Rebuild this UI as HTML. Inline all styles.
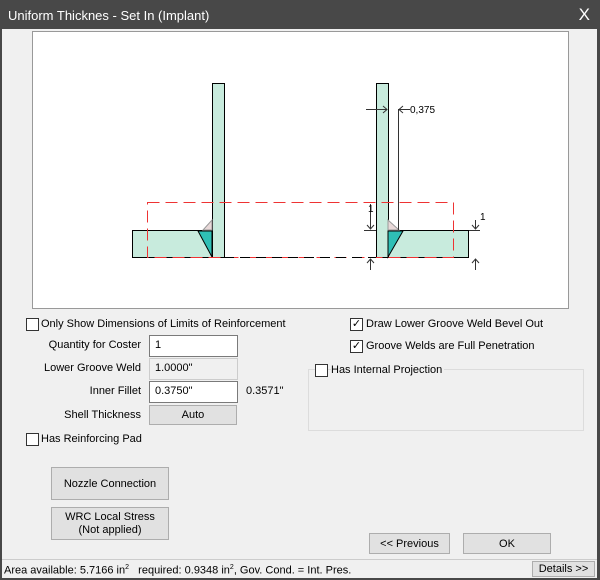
<!DOCTYPE html>
<html><head><style>
*{box-sizing:border-box}
body{margin:0;width:600px;height:580px;background:#484848;font-family:"Liberation Sans",sans-serif;font-size:11px;color:#000;position:relative;overflow:hidden}
.title{position:absolute;left:8px;top:8px;color:#fff;font-size:13px}
.x{position:absolute;right:10px;top:5px;color:#fff;font-size:17px}
.body{position:absolute;left:2px;top:29px;width:595px;height:549px;background:#f0f0f0}
.a{position:absolute}
.cb{position:absolute;width:13px;height:13px;border:1px solid #333;background:#fff}
.inp{position:absolute;height:22px;border:1px solid #7a7a7a;background:#fff;padding:3px 5px}
.ro{background:#f0f0f0;border-color:#ccc}
.btn{position:absolute;background:#e1e1e1;border:1px solid #adadad;text-align:center;display:flex;align-items:center;justify-content:center}
.lbl{position:absolute;text-align:right;width:141px;left:0}
</style></head><body>
<div class="title">Uniform Thicknes - Set In (Implant)</div>
<div class="x">X</div>
<div class="body"></div>
<svg class="a" style="left:0;top:0" width="600" height="580">
<rect x="32.5" y="31.5" width="536" height="277" fill="#fff" stroke="#999"/>
<g stroke="#000" stroke-width="1" fill="#c8ebdd">
<rect x="212.5" y="83.5" width="12" height="174"/>
<rect x="132.5" y="230.5" width="80" height="27"/>
<rect x="376.5" y="83.5" width="12" height="174"/>
<rect x="388.5" y="230.5" width="80" height="27"/>
</g>
<polygon points="198,231 212,231 212,257" fill="#2fbfb5" stroke="#000"/>
<polygon points="203,230 212,220 212,230" fill="#e8d8d8" stroke="#999"/>
<polygon points="388,231 403,231 388,257" fill="#2fbfb5" stroke="#000"/>
<polygon points="388,220 399,230 388,230" fill="#e8d8d8" stroke="#999"/>
<rect x="147.5" y="202.5" width="306" height="55" fill="none" stroke="#e33" stroke-dasharray="12,6"/>
<line x1="224" y1="257.5" x2="376" y2="257.5" stroke="#000" stroke-dasharray="10,6"/>
<g stroke="#333" fill="none">
<line x1="398.5" y1="109" x2="398.5" y2="230"/>
<line x1="366" y1="109.5" x2="387" y2="109.5"/><path d="M383,106 L387,109.5 L383,113"/>
<line x1="399" y1="109.5" x2="410" y2="109.5"/><path d="M403,106 L399,109.5 L403,113"/>
<line x1="370.5" y1="204" x2="370.5" y2="229"/><path d="M367,225 L370.5,229 L374,225"/>
<line x1="364" y1="230.5" x2="376" y2="230.5"/>
<line x1="370.5" y1="259" x2="370.5" y2="270"/><path d="M367,263 L370.5,259 L374,263"/>
<line x1="469" y1="230.5" x2="480" y2="230.5"/>
<line x1="475.5" y1="220" x2="475.5" y2="229"/><path d="M472,225 L475.5,229 L479,225"/>
<line x1="475.5" y1="259" x2="475.5" y2="270"/><path d="M472,263 L475.5,259 L479,263"/>
</g>
<text x="410" y="113" font-size="10" font-family="Liberation Sans">0,375</text>
<text x="368" y="212" font-size="10" font-family="Liberation Sans">1</text>
<text x="480" y="220" font-size="10" font-family="Liberation Sans">1</text>
<rect x="308.5" y="369.5" width="275" height="61" fill="none" stroke="#dcdcdc"/>
</svg>
<div class="cb" style="left:26px;top:318px"></div><div class="a" style="left:41px;top:318px">Only Show Dimensions of Limits of Reinforcement</div>
<div class="lbl" style="top:339px">Quantity for Coster</div><div class="inp" style="left:149px;top:335px;width:89px">1</div>
<div class="lbl" style="top:362px">Lower Groove Weld</div><div class="inp ro" style="left:149px;top:358px;width:89px">1.0000"</div>
<div class="lbl" style="top:385px">Inner Fillet</div><div class="inp" style="left:149px;top:381px;width:89px">0.3750"</div>
<div class="a" style="left:246px;top:385px">0.3571"</div>
<div class="lbl" style="top:409px">Shell Thickness</div><div class="btn" style="left:149px;top:405px;width:88px;height:20px">Auto</div>
<div class="cb" style="left:26px;top:433px"></div><div class="a" style="left:41px;top:433px">Has Reinforcing Pad</div>
<div class="cb" style="left:350px;top:318px;font-size:11px;line-height:10px;text-align:center">✓</div><div class="a" style="left:366px;top:318px">Draw Lower Groove Weld Bevel Out</div>
<div class="cb" style="left:350px;top:340px;font-size:11px;line-height:10px;text-align:center">✓</div><div class="a" style="left:366px;top:340px">Groove Welds are Full Penetration</div>
<div class="cb" style="left:315px;top:364px"></div><div class="a" style="left:331px;top:364px;background:#f0f0f0;padding-right:2px">Has Internal Projection</div>
<div class="btn" style="left:51px;top:467px;width:118px;height:33px">Nozzle Connection</div>
<div class="btn" style="left:51px;top:507px;width:118px;height:33px;line-height:13px">WRC Local Stress<br>(Not applied)</div>
<div class="btn" style="left:369px;top:533px;width:81px;height:21px">&lt;&lt; Previous</div>
<div class="btn" style="left:463px;top:533px;width:88px;height:21px">OK</div>
<div class="a" style="left:2px;top:559px;width:595px;height:1px;background:#ccc"></div>
<div class="a" style="left:4px;top:564px">Area available: 5.7166 in<sup style="font-size:7px">2</sup> &nbsp; required: 0.9348 in<sup style="font-size:7px">2</sup>, Gov. Cond. = Int. Pres.</div>
<div class="btn" style="left:532px;top:561px;width:63px;height:16px">Details &gt;&gt;</div>
</body></html>
